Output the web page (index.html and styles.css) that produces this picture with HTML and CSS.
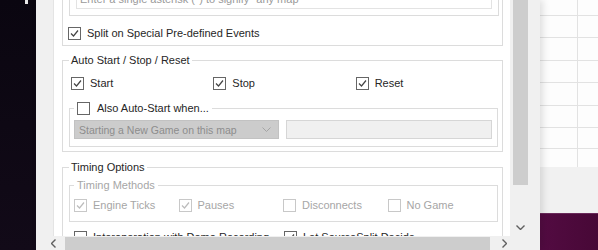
FILE: index.html
```html
<!DOCTYPE html>
<html lang="en">
<head>
  <meta charset="UTF-8" />
  <meta name="viewport" content="width=device-width, initial-scale=1.0"/>
  <title>SourceSplit Settings</title>
  <link rel="stylesheet" href="styles.css">
</head>
<body>

<div class="desk-left"><span class="mark"></span></div>

<div class="window">
  <div class="window-main">
    <div class="frame-left"></div>

    <div class="scroll-view">
      <div class="scroll-content">

        <fieldset class="group group-split">
          <legend>Auto Split</legend>
          <fieldset class="group group-maps">
            <legend>Map Transitions</legend>
            <div class="textbox hint">Enter a single asterisk (*) to signify "any map"</div>
          </fieldset>
          <label class="check row-split">
            <span class="cb"><svg viewBox="0 0 11 11"><polyline points="2,5.5 4.5,8 9,2.5"/></svg></span>
            Split on Special Pre-defined Events
          </label>
        </fieldset>

        <fieldset class="group group-auto">
          <legend>Auto Start / Stop / Reset</legend>
          <div class="row row-auto">
            <label class="check">
              <span class="cb"><svg viewBox="0 0 11 11"><polyline points="2,5.5 4.5,8 9,2.5"/></svg></span>
              Start
            </label>
            <label class="check">
              <span class="cb"><svg viewBox="0 0 11 11"><polyline points="2,5.5 4.5,8 9,2.5"/></svg></span>
              Stop
            </label>
            <label class="check">
              <span class="cb"><svg viewBox="0 0 11 11"><polyline points="2,5.5 4.5,8 9,2.5"/></svg></span>
              Reset
            </label>
          </div>

          <fieldset class="group group-also">
            <legend>
              <label class="check"><span class="cb"></span>Also Auto-Start when...</label>
            </legend>
            <div class="row row-also">
              <div class="select">
                Starting a New Game on this map
                <svg class="chev" viewBox="0 0 9 5"><polyline points="0.5,0.5 4.5,4.5 8.5,0.5"/></svg>
              </div>
              <div class="textbox field"></div>
            </div>
          </fieldset>
        </fieldset>

        <fieldset class="group group-timing">
          <legend>Timing Options</legend>
          <fieldset class="group group-methods disabled">
            <legend>Timing Methods</legend>
            <div class="row row-methods">
              <label class="check">
                <span class="cb"><svg viewBox="0 0 11 11"><polyline points="2,5.5 4.5,8 9,2.5"/></svg></span>
                Engine Ticks
              </label>
              <label class="check">
                <span class="cb"><svg viewBox="0 0 11 11"><polyline points="2,5.5 4.5,8 9,2.5"/></svg></span>
                Pauses
              </label>
              <label class="check"><span class="cb"></span>Disconnects</label>
              <label class="check"><span class="cb"></span>No Game</label>
            </div>
          </fieldset>
          <div class="row row-interop">
            <label class="check"><span class="cb"></span>Interoperation with Demo Recording</label>
            <label class="check">
              <span class="cb"><svg viewBox="0 0 11 11"><polyline points="2,5.5 4.5,8 9,2.5"/></svg></span>
              Let SourceSplit Decide
            </label>
          </div>
        </fieldset>

      </div>
    </div>

    <div class="vscroll">
      <div class="vthumb"></div>
      <div class="vspace"></div>
      <div class="vbtn"><svg viewBox="0 0 9 5"><polyline points="0.5,0.5 4.5,4.5 8.5,0.5"/></svg></div>
    </div>

    <div class="frame-right"></div>
  </div>

  <div class="hscroll">
    <div class="hbtn hbtn-left"><svg viewBox="0 0 5 9"><polyline points="4.5,0.5 0.5,4.5 4.5,8.5"/></svg></div>
    <div class="hthumb"></div>
    <div class="hbtn hbtn-right"><svg viewBox="0 0 5 9"><polyline points="0.5,0.5 4.5,4.5 0.5,8.5"/></svg></div>
  </div>
</div>

<div class="desk-right">
  <div class="sheet">
    <div class="sheet-row r16"><div class="cell"></div></div>
    <div class="sheet-row r22"><div class="cell"></div></div>
    <div class="sheet-row r23"><div class="cell"></div></div>
    <div class="sheet-row r22"><div class="cell"></div></div>
    <div class="sheet-row r23"><div class="cell"></div></div>
    <div class="sheet-row r22"><div class="cell"></div></div>
    <div class="sheet-row r21"><div class="cell"></div></div>
    <div class="sheet-row last"><div class="cell"></div></div>
  </div>
  <div class="sheet-gray"></div>
  <div class="dark-band"></div>
</div>

</body>
</html>
```

FILE: styles.css
```css
html, body {
  margin: 0;
  height: 100%;
}
body {
  display: flex;
  width: 598px;
  height: 250px;
  overflow: hidden;
  background: #0b0710;
  font-family: 'Liberation Sans', Arial, sans-serif;
  font-size: 11px;
  color: #262626;
}

/* desktop around the window */
.desk-left {
  width: 36px;
  flex: none;
  background: linear-gradient(#0a0610, #120a18);
}
.mark {
  display: block;
  width: 3px;
  height: 4px;
  margin-left: 25px;
  background: #e8e8e8;
}
.desk-right {
  width: 58px;
  flex: none;
  display: flex;
  flex-direction: column;
}
.sheet {
  height: 167px;
  background: #fdfdfd;
}
.sheet-row {
  display: flex;
  box-sizing: border-box;
  border-bottom: 1px solid #e2e2e2;
}
.sheet-row.r16 { height: 16px; }
.sheet-row.r21 { height: 21px; }
.sheet-row.r22 { height: 22px; }
.sheet-row.r23 { height: 23px; }
.sheet-row.last { height: 18px; border-bottom: none; }
.cell {
  width: 37px;
  border-right: 1px solid #e2e2e2;
}
.sheet-gray {
  height: 46px;
  background: #f1f1f1;
}
.dark-band {
  flex: 1;
  background: linear-gradient(90deg, #530b42, #470836);
  border-top: 1px solid #6a2a5a;
}

/* window */
.window {
  position: relative;
  z-index: 1;
  width: 504px;
  flex: none;
  display: flex;
  flex-direction: column;
  background: #f0f0f0;
  box-shadow: 3px 0 7px rgba(0, 0, 0, 0.12);
}
.window-main {
  display: flex;
  height: 236px;
}
.frame-left {
  width: 17px;
}
.frame-right {
  width: 10px;
}
.scroll-view {
  width: 457px;
  box-sizing: border-box;
  border-left: 1px solid #e4e4e4;
  background: #fff;
  overflow: hidden;
}
.scroll-content {
  margin-top: -48px;
  padding: 0 7px 0 8px;
}

/* group boxes */
.group {
  margin: 0;
  padding: 0 4px 4px 6px;
  border: 1px solid #dcdcdc;
  min-width: 0;
}
.group legend {
  padding: 0 2px;
  height: 13px;
  line-height: 13px;
}
.group-split {
  padding: 0 3px 2px 6px;
}
.group-maps {
  margin-top: 2px;
  padding: 0 6px 6px 6px;
}
.group-auto {
  margin-top: 8px;
}
.group-also {
  margin-top: 3px;
  padding: 0 5px 7px 4px;
}
.group-also legend,
.group-methods legend {
  padding: 0 3px;
}
.group-timing {
  margin-top: 9px;
}
.group-methods {
  margin-top: 5px;
  padding: 0 5px 3px 4px;
}

.textbox {
  box-sizing: border-box;
  border: 1px solid #e3e3e3;
  background: #fff;
}
.hint {
  margin-top: 4px;
  padding: 8px 3px 2px;
  line-height: 13px;
  color: #9a9a9a;
  white-space: nowrap;
  overflow: hidden;
}

/* checkboxes */
.check {
  display: flex;
  align-items: center;
  gap: 6px;
  white-space: nowrap;
  line-height: 13px;
}
.cb {
  width: 13px;
  height: 13px;
  flex: none;
  box-sizing: border-box;
  border: 1px solid #666;
  background: #fff;
}
.cb svg {
  display: block;
  width: 11px;
  height: 11px;
  fill: none;
  stroke: #444;
  stroke-width: 1.2;
}
.group-also legend .check {
  gap: 7px;
}
.disabled,
.disabled legend {
  color: #a6a6a6;
}
.disabled .cb {
  border-color: #c8c8c8;
}
.disabled .cb svg {
  stroke: #bcbcbc;
}

.row {
  display: flex;
  align-items: center;
}
.row-split {
  margin: 7px 0 0 -1px;
  height: 20px;
}
.row-auto {
  height: 32px;
  padding-left: 2px;
}
.row-auto .check {
  width: 143px;
}
.row-also {
  margin-top: 5px;
  height: 19px;
  gap: 7px;
  align-items: stretch;
}
.select {
  width: 205px;
  box-sizing: border-box;
  display: flex;
  align-items: center;
  justify-content: space-between;
  padding: 0 7px 0 4px;
  background: #cccccc;
  border: 1px solid #c2c2c2;
  color: #8c8c8c;
  font-size: 10.5px;
}
.chev {
  width: 9px;
  height: 5px;
  fill: none;
  stroke: #a4a4a4;
  stroke-width: 1;
}
.field {
  width: 206px;
  background: #f0f0f0;
  border-color: #d6d6d6;
}
.row-methods {
  height: 26px;
}
.row-methods .check {
  width: 105px;
}
.row-interop {
  height: 30px;
  padding-left: 5px;
}
.row-interop .check:first-child {
  width: 210px;
}

/* scrollbars */
.vscroll {
  width: 20px;
  display: flex;
  flex-direction: column;
}
.vthumb {
  height: 185px;
  margin: 0 2px 0 3px;
  background: #cdcdcd;
}
.vspace {
  flex: 1;
}
.vbtn {
  height: 17px;
  display: flex;
  align-items: center;
  justify-content: center;
  padding-left: 1px;
}
.vbtn svg {
  width: 9px;
  height: 5px;
  fill: none;
  stroke: #606060;
  stroke-width: 1.4;
}
.hscroll {
  height: 14px;
  display: flex;
}
.hbtn {
  display: flex;
  align-items: center;
}
.hbtn svg {
  width: 5px;
  height: 9px;
  fill: none;
  stroke: #606060;
  stroke-width: 1.4;
}
.hbtn-left {
  width: 29px;
  box-sizing: border-box;
  padding-left: 15px;
}
.hbtn-right {
  width: 28px;
  justify-content: center;
}
.hthumb {
  width: 425px;
  margin-top: 1px;
  background: #cdcdcd;
}
```
